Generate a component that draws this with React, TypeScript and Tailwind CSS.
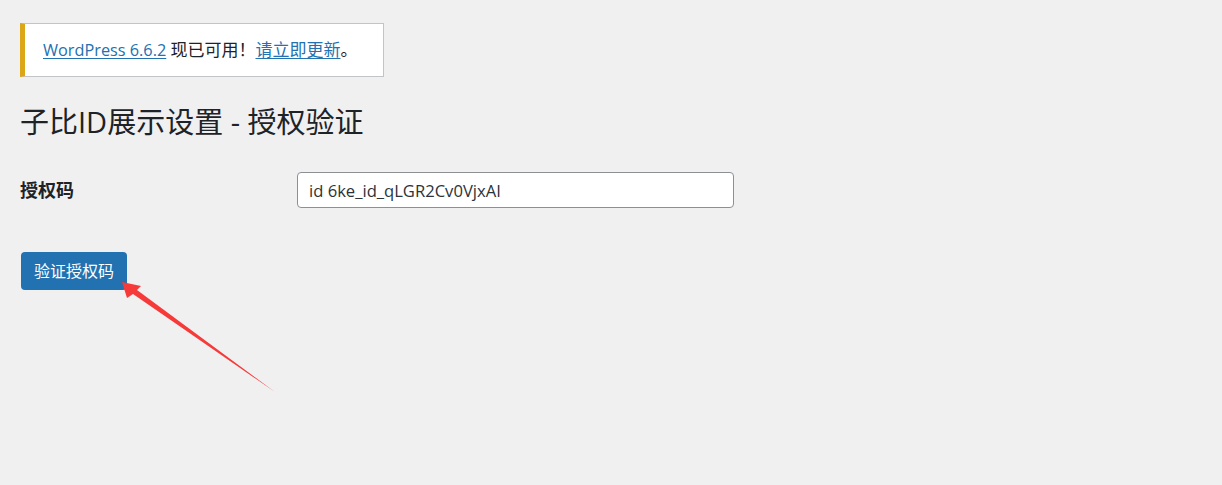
const font = "font-['Segoe_UI','Open_Sans','Noto_Sans_CJK_SC',sans-serif]";

export default function App() {
  return (
    <div className={`relative min-h-[485px] bg-[#f0f0f1] pl-5 pt-[23px] text-[#1d2327] ${font}`}>
      <div className="flex h-[54px] w-[364px] items-center border border-l-[5px] border-[#c3c4c7] border-l-[#dba617] bg-white pl-[18px] text-[16.3px]">
        <p>
          <a href="#" className="text-[#2271b1] underline underline-offset-2">WordPress 6.6.2</a>{" "}
          <span className="text-[17px]">现已可用！</span>
          <a href="#" className="text-[17px] text-[#2271b1] underline underline-offset-2">请立即更新</a>
          <span className="text-[17px]">。</span>
        </p>
      </div>

      <h1 className="mt-[25px] text-[29px] leading-[40px] font-normal">子比ID展示设置 - 授权验证</h1>

      <div className="mt-[30px] flex items-center">
        <label className="w-[277px] text-[18px] font-bold">授权码</label>
        <input
          type="text"
          defaultValue="id 6ke_id_qLGR2Cv0VjxAI"
          className={`h-[36px] w-[437px] rounded-[4px] border border-[#8c8f94] bg-white px-[11px] text-[16.6px] text-[#2c3338] outline-none ${font}`}
        />
      </div>

      <button className="mt-[44px] ml-px h-[38px] rounded-[4px] bg-[#2271b1] px-[13px] text-[16px] text-white">
        验证授权码
      </button>

      <svg className="absolute left-0 top-0" width="300" height="400" viewBox="0 0 300 400">
        <polygon points="122,282 141,286 137,290 275,392 133,294 127,298" fill="#f63a3a" />
      </svg>
    </div>
  );
}
